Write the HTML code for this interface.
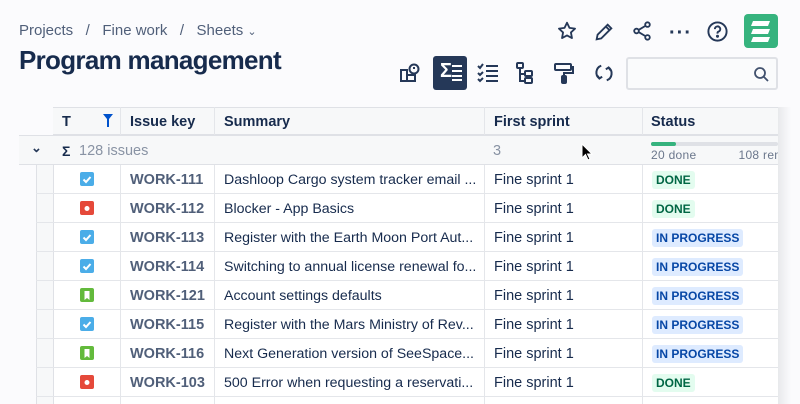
<!DOCTYPE html>
<html><head><meta charset="utf-8"><style>
*{box-sizing:border-box;margin:0;padding:0}
body{width:800px;height:404px;overflow:hidden;background:#fbfbfd;font-family:"Liberation Sans",sans-serif;color:#172b4d;position:relative}
.a{position:absolute}
.bc{left:19px;top:22px;font-size:15px;color:#505f79}
h1{position:absolute;left:19px;top:45px;font-size:26px;font-weight:bold;color:#172b4d;letter-spacing:-0.7px}
.ic{position:absolute}
.tb{position:absolute;left:53px;top:107px;width:725px;height:297px;background:#fff;border-left:1px solid #dfe1e6}
.hl{position:absolute;top:107px;height:297px;width:1px;background:#e4e6ea}
.row{position:absolute;left:36px;width:742px;height:29px;border-bottom:1px solid #e4e6ea;font-size:14.5px}
.row span{position:absolute;top:7px}
.k{left:94px;color:#505f79;font-weight:bold}
.s{left:188px;color:#172b4d;font-size:14.2px}
.f{left:458px}
.st{left:616px!important;top:6px!important;font-size:12px;font-weight:bold;padding:2px 4px;border-radius:3px}
.dn{background:#e3fcef;color:#006644}
.ip{background:#deebff;color:#0747a6}
.ty{position:absolute;left:44px;top:7px;width:14px;height:14px;border-radius:2px}
</style></head><body>
<div class="a bc">Projects &nbsp;&nbsp;/&nbsp;&nbsp; Fine work &nbsp;&nbsp;/&nbsp;&nbsp; Sheets <span style="font-size:11px">&#8964;</span></div>
<h1>Program management</h1>
<svg class="ic" style="left:556px;top:20px" width="22" height="22" viewBox="0 0 24 24" fill="none" stroke="#253858" stroke-width="2" stroke-linejoin="round"><path d="M12 3l2.7 5.6 6.1.8-4.5 4.2 1.1 6.1L12 16.8 6.6 19.7l1.1-6.1L3.2 9.4l6.1-.8z"/></svg>
<svg class="ic" style="left:593px;top:21px" width="22" height="22" viewBox="0 0 24 24" fill="none" stroke="#253858" stroke-width="2"><path d="M4 20l1-5L16 4l4 4L9 19z M14 6l4 4"/></svg>
<svg class="ic" style="left:631px;top:20px" width="22" height="22" viewBox="0 0 24 24" fill="none" stroke="#253858" stroke-width="2"><circle cx="18" cy="5" r="2.5"/><circle cx="6" cy="12" r="2.5"/><circle cx="18" cy="19" r="2.5"/><path d="M8.3 10.8l7.4-4.4M8.3 13.2l7.4 4.4"/></svg>
<div class="a" style="left:669px;top:22px;font-size:20px;font-weight:bold;color:#253858;letter-spacing:1px">&middot;&middot;&middot;</div>
<svg class="ic" style="left:706px;top:20px" width="23" height="23" viewBox="0 0 24 24" fill="none" stroke="#253858" stroke-width="2"><circle cx="12" cy="12" r="9.5"/><path d="M9.3 9.5a2.8 2.8 0 1 1 3.7 2.6c-.7.3-1 .8-1 1.5v.6"/><circle cx="12" cy="17" r=".6" fill="#253858"/></svg>
<div class="a" style="left:744px;top:14px;width:34px;height:34px;background:#36b37e;border-radius:4px"></div>
<svg class="ic" style="left:744px;top:14px" width="34" height="34" viewBox="0 0 34 34" fill="#fff"><path d="M9 7h17l-2 5H7z M9 15h17l-2 5H7z M9 23h17l-2 5H7z"/></svg>
<svg class="ic" style="left:398px;top:61px" width="24" height="24" viewBox="0 0 24 24" fill="none" stroke="#253858" stroke-width="2"><path d="M3 9h6v11H3zM9 14h8v6H9z"/><circle cx="16" cy="8" r="4.5"/><path d="M16 6v2"/></svg>
<div class="a" style="left:433px;top:56px;width:34px;height:34px;background:#253858;border-radius:3px"></div>
<div class="a" style="left:440px;top:60px;color:#fff;font-size:20px;font-weight:bold">&Sigma;</div>
<svg class="ic" style="left:451px;top:64px" width="12" height="18" viewBox="0 0 12 18" stroke="#fff" stroke-width="2"><path d="M1 2h10M1 7h10M1 12h10M1 16h10"/></svg>
<svg class="ic" style="left:476px;top:62px" width="24" height="22" viewBox="0 0 24 22" fill="none" stroke="#253858" stroke-width="2"><path d="M2 4l2 2 3-4M2 11l2 2 3-3M2 17l2 2 3-3M10 4h12M10 9h12M10 14h12M10 19h12"/></svg>
<svg class="ic" style="left:514px;top:61px" width="22" height="24" viewBox="0 0 22 24" fill="none" stroke="#253858" stroke-width="2"><rect x="3" y="2" width="6" height="5" rx="1"/><path d="M6 7v13h5M6 13h5"/><rect x="11" y="10" width="7" height="5" rx="1"/><rect x="11" y="17" width="7" height="5" rx="1"/></svg>
<svg class="ic" style="left:553px;top:61px" width="22" height="24" viewBox="0 0 22 24" fill="none" stroke="#253858" stroke-width="2"><rect x="2" y="3" width="16" height="6" rx="1"/><path d="M18 6h2v6h-9v3"/><rect x="9" y="15" width="4" height="7" rx="1" fill="#253858"/></svg>
<svg class="ic" style="left:593px;top:62px" width="22" height="22" viewBox="0 0 24 24" fill="none" stroke="#253858" stroke-width="2.2"><path d="M9 4a8 8 0 0 0-2 14M5 15l2 3 3-2M15 20a8 8 0 0 0 2-14M19 9l-2-3-3 2"/></svg>
<div class="a" style="left:626px;top:57px;width:152px;height:33px;border:2px solid #dfe1e6;border-radius:3px;background:#fafbfc"></div>
<svg class="ic" style="left:753px;top:66px" width="16" height="16" viewBox="0 0 16 16" fill="none" stroke="#42526e" stroke-width="1.8"><circle cx="7" cy="7" r="5"/><path d="M11 11l4 4"/></svg>
<div class="tb"></div>
<div class="a" style="left:53px;top:107px;width:725px;height:28px;background:#f7f8f9;border-top:1px solid #dfe1e6;border-bottom:1px solid #dfe1e6"></div>
<div class="a" style="left:19px;top:135px;width:759px;height:30px;background:#f7f8f9;border-top:1px solid #dfe1e6;border-bottom:1px solid #dfe1e6"></div>
<div class="a" style="left:36px;top:165px;width:17px;height:239px;background:#f7f8f9;border-left:1px solid #dfe1e6"></div>
<div class="hl" style="left:120px;height:28px"></div>
<div class="hl" style="left:120px;top:165px;height:239px"></div>
<div class="hl" style="left:214px;height:28px"></div><div class="hl" style="left:214px;top:165px;height:239px"></div>
<div class="hl" style="left:484px;height:28px"></div><div class="hl" style="left:484px;top:165px;height:239px"></div>
<div class="hl" style="left:642px;height:28px"></div><div class="hl" style="left:642px;top:165px;height:239px"></div>
<div class="a" style="left:62px;top:114px;font-size:14.5px;font-weight:bold">T</div>
<svg class="ic" style="left:103px;top:114px" width="10" height="13" viewBox="0 0 10 13" fill="#0052cc"><path d="M0 0h10L6 5v8H4V5z"/></svg>
<div class="a" style="left:130px;top:114px;font-size:14.5px;font-weight:bold">Issue key</div>
<div class="a" style="left:224px;top:114px;font-size:14.5px;font-weight:bold">Summary</div>
<div class="a" style="left:494px;top:114px;font-size:14.5px;font-weight:bold">First sprint</div>
<div class="a" style="left:651px;top:114px;font-size:14.5px;font-weight:bold">Status</div>
<div class="a" style="left:31px;top:140px;font-size:13px;color:#253858;font-weight:bold">&#8964;</div>
<div class="a" style="left:62px;top:143px;font-size:14px;font-weight:bold">&Sigma;</div>
<div class="a" style="left:79px;top:143px;font-size:14.5px;color:#8993a4">128 issues</div>
<div class="a" style="left:493px;top:143px;font-size:14.5px;color:#8993a4">3</div>
<div class="a" style="left:651px;top:142px;width:127px;height:4px;background:#dfe1e6;border-radius:2px"></div>
<div class="a" style="left:651px;top:142px;width:25px;height:4px;background:#36b37e;border-radius:2px"></div>
<div class="a" style="left:651px;top:148px;width:127px;overflow:hidden;font-size:12px;color:#6b778c;white-space:nowrap;letter-spacing:0.3px">20 done<span style="margin-left:42px">108 rem</span></div>
<svg class="ic" style="left:581px;top:143px" width="12" height="18" viewBox="0 0 12 18"><path d="M1 1v14l3.5-3.5 2.5 5.5 2-1-2.5-5H11z" fill="#000" stroke="#fff" stroke-width="1"/></svg>

<div class="row" style="top:165px"><i class="ty" style="background:#4bade8"></i><span class="k">WORK-111</span><span class="s">Dashloop Cargo system tracker email ...</span><span class="f">Fine sprint 1</span><span class="st dn">DONE</span></div>
<div class="row" style="top:194px"><i class="ty" style="background:#e5493a"></i><span class="k">WORK-112</span><span class="s">Blocker - App Basics</span><span class="f">Fine sprint 1</span><span class="st dn">DONE</span></div>
<div class="row" style="top:223px"><i class="ty" style="background:#4bade8"></i><span class="k">WORK-113</span><span class="s">Register with the Earth Moon Port Aut...</span><span class="f">Fine sprint 1</span><span class="st ip">IN PROGRESS</span></div>
<div class="row" style="top:252px"><i class="ty" style="background:#4bade8"></i><span class="k">WORK-114</span><span class="s">Switching to annual license renewal fo...</span><span class="f">Fine sprint 1</span><span class="st ip">IN PROGRESS</span></div>
<div class="row" style="top:281px"><i class="ty" style="background:#63ba3c"></i><span class="k">WORK-121</span><span class="s">Account settings defaults</span><span class="f">Fine sprint 1</span><span class="st ip">IN PROGRESS</span></div>
<div class="row" style="top:310px"><i class="ty" style="background:#4bade8"></i><span class="k">WORK-115</span><span class="s">Register with the Mars Ministry of Rev...</span><span class="f">Fine sprint 1</span><span class="st ip">IN PROGRESS</span></div>
<div class="row" style="top:339px"><i class="ty" style="background:#63ba3c"></i><span class="k">WORK-116</span><span class="s">Next Generation version of SeeSpace...</span><span class="f">Fine sprint 1</span><span class="st ip">IN PROGRESS</span></div>
<div class="row" style="top:368px"><i class="ty" style="background:#e5493a"></i><span class="k">WORK-103</span><span class="s">500 Error when requesting a reservati...</span><span class="f">Fine sprint 1</span><span class="st dn">DONE</span></div>
<div class="a" style="left:778px;top:107px;width:22px;height:297px;background:linear-gradient(90deg,#e8e9ec,#fbfbfd 60%)"></div>
<svg class="ic" style="left:80px;top:165px" width="14" height="239" viewBox="0 0 14 239" fill="none" stroke="#fff" stroke-width="2">
<path d="M3.5 14.5l2.5 2.5 4.5-5M3.5 72.5l2.5 2.5 4.5-5M3.5 101.5l2.5 2.5 4.5-5M3.5 159.5l2.5 2.5 4.5-5"/>
<circle cx="7" cy="43.5" r="2.5" fill="#fff" stroke="none"/><circle cx="7" cy="217.5" r="2.5" fill="#fff" stroke="none"/>
<path d="M4.5 126h5v9l-2.5-2-2.5 2zM4.5 184h5v9l-2.5-2-2.5 2z" fill="#fff" stroke="none"/>
</svg>
</body></html>
